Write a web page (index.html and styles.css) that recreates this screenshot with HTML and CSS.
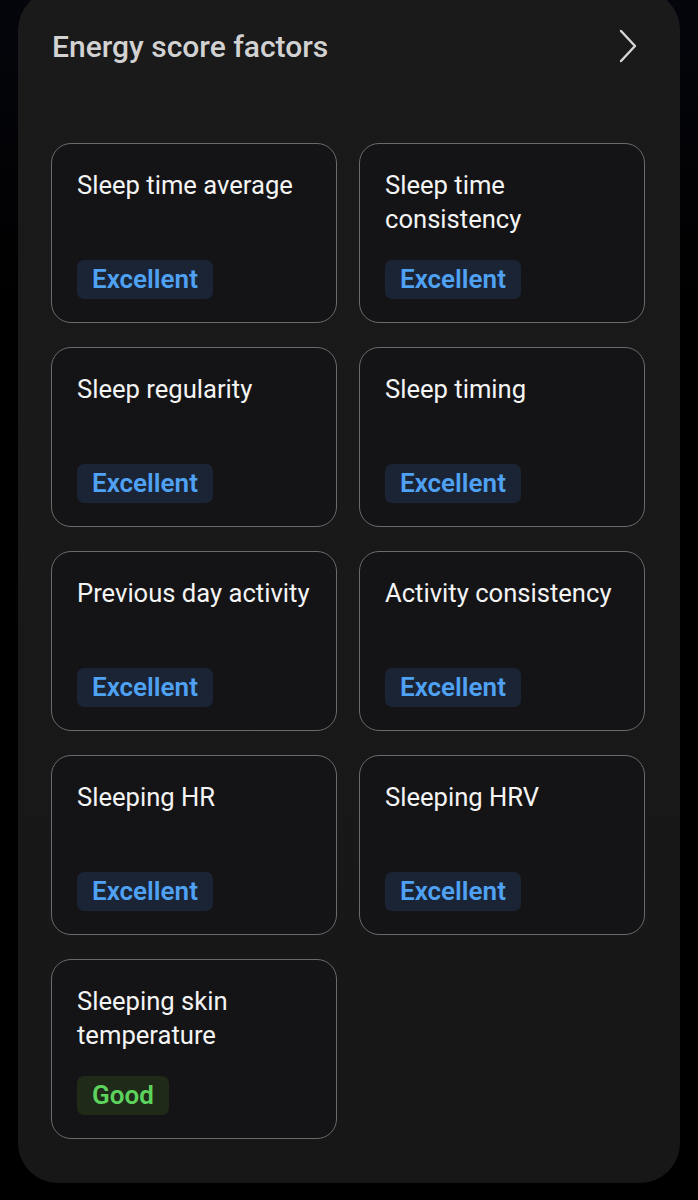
FILE: index.html
```html
<!DOCTYPE html>
<html lang="en">
<head>
<meta charset="UTF-8">
<meta name="viewport" content="width=device-width, initial-scale=1.0">
<title>Energy score factors</title>
<link rel="stylesheet" href="styles.css">
</head>
<body>
<div class="panel">
  <div class="panel-header">
    <h2>Energy score factors</h2>
    <svg class="chevron" width="20" height="34" viewBox="0 0 20 34">
      <path d="M3 2 L17 17 L3 32" fill="none" stroke="#d6d6d6" stroke-width="2.4" stroke-linecap="round" stroke-linejoin="round"/>
    </svg>
  </div>

  <div class="factors">
    <div class="factor">
      <div class="factor-name">Sleep time average</div>
      <span class="badge excellent">Excellent</span>
    </div>
    <div class="factor">
      <div class="factor-name">Sleep time consistency</div>
      <span class="badge excellent">Excellent</span>
    </div>
    <div class="factor">
      <div class="factor-name">Sleep regularity</div>
      <span class="badge excellent">Excellent</span>
    </div>
    <div class="factor">
      <div class="factor-name">Sleep timing</div>
      <span class="badge excellent">Excellent</span>
    </div>
    <div class="factor">
      <div class="factor-name">Previous day activity</div>
      <span class="badge excellent">Excellent</span>
    </div>
    <div class="factor">
      <div class="factor-name">Activity consistency</div>
      <span class="badge excellent">Excellent</span>
    </div>
    <div class="factor">
      <div class="factor-name">Sleeping HR</div>
      <span class="badge excellent">Excellent</span>
    </div>
    <div class="factor">
      <div class="factor-name">Sleeping HRV</div>
      <span class="badge excellent">Excellent</span>
    </div>
    <div class="factor">
      <div class="factor-name">Sleeping skin temperature</div>
      <span class="badge good">Good</span>
    </div>
  </div>
</div>
</body>
</html>
```

FILE: styles.css
```css
html {
  background-color: #000;
}

body {
  font-family: Roboto, "Noto Sans", sans-serif;
  margin: 0;
  padding: 0 18px 17px;
  background: linear-gradient(#05060c, #000 300px);
  color: #f2f2f2;
}

.panel {
  margin-top: -10px;
  padding: 30px 35px 44px 33px;
  background: linear-gradient(#1a1a1b, #171718);
  border-radius: 40px;
}

.panel-header {
  display: flex;
  align-items: center;
  justify-content: space-between;
  height: 52px;
  padding-left: 1px;
}

.panel-header h2 {
  margin: 0;
  font-size: 30px;
  font-weight: 500;
  color: #d2d2d2;
}

.chevron {
  margin-right: 7px;
}

.factors {
  display: grid;
  grid-template-columns: 1fr 1fr;
  gap: 24px 22px;
  margin-top: 71px;
}

.factor {
  display: flex;
  flex-direction: column;
  align-items: flex-start;
  box-sizing: border-box;
  height: 180px;
  padding: 24px 18px 23px 25px;
  background-color: #141416;
  border: 1px solid #6a6a6c;
  border-radius: 20px;
}

.factor-name {
  font-size: 25.6px;
  line-height: 34px;
  color: #f4f4f4;
}

.badge {
  margin-top: auto;
  padding: 0 15px;
  height: 39px;
  line-height: 39px;
  border-radius: 7px;
  font-size: 26px;
  font-weight: 600;
}

.badge.excellent {
  background-color: #1b2434;
  color: #4fa2f3;
}

.badge.good {
  background-color: #1f2a18;
  color: #5cd35c;
}
```
